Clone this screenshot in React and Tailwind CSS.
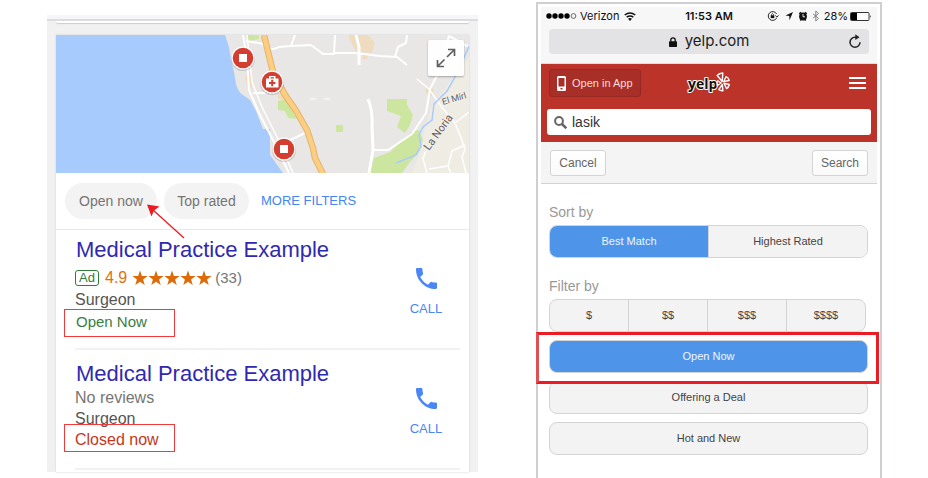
import React from "react";

const STAR = "M8 0.6 L9.9 6 L15.6 6.1 L11.1 9.5 L12.7 15 L8 11.7 L3.3 15 L4.9 9.5 L0.4 6.1 L6.1 6 Z";

function MapView() {
  return (
    <svg
      viewBox="56 35 413 138"
      preserveAspectRatio="xMaxYMid slice"
      className="block h-[138px] w-full bg-[#a8cbfe]"
      role="img"
      aria-label="Map of nearby practices"
    >
      <rect x="56" y="35" width="413" height="138" fill="#a8cbfe" />
      <path
        d="M225 35 L229 47 L231 60 L234 72 L236 84 Q238 92 243 95 L250 100 L256 111 L263 129 L270 129 L270 155 L283 173 L469 173 L469 35 Z"
        fill="#e8e7e5"
      />
      <path d="M469 57 L450 82 L432 106 L425 128 L421 150 L412 173 L469 173 Z" fill="#efece4" />
      <path d="M247 35 h12 v4 l-10 2 Z" fill="#cde69f" />
      <path d="M278 101 L286 99 L297 119 L288 118 L285 111 L278 110 Z" fill="#cde69f" />
      <rect x="336" y="125" width="7" height="7" fill="#cde69f" />
      <path d="M387 99 L407 99 L407 105 L413 115 L410 125 L405 133 L397 127 L401 116 L387 111 Z" fill="#cde69f" />
      <path d="M413 131 L419 130 L423 140 L418 153 L410 162 L402 173 L370 173 L374 158 L390 152 Z" fill="#cde69f" />
      <path d="M348 35 L368 35 L375 43 L372 53 L356 52 L352 44 Z" fill="#efdcc0" />
      <path d="M363 55 l5 0 l-1 4 l-5 0 Z M426 88 l8 1 l-2 7 l-6 -3 Z M245 78 l5 -9 l3 14 l-4 8 Z M277 93 l7 0 l2 6 l-8 0 Z" fill="#efdcc0" />
      <g fill="none" stroke="#ffffff" strokeLinejoin="round">
        <path d="M243 35 L247 58 L249 90 L259 113 L275 144 L289 173" strokeWidth="2" />
        <path d="M247 35 L252 82 L262 107 L279 141 L293 173" strokeWidth="1.5" />
        <path d="M246 41 L264 44 M253 93 H265" strokeWidth="2" />
        <path d="M262 44 Q270 52 279 47 L291 46 L295 35 M291 46 L311 45 L323 54 L334 54 L335 35 M334 53 L355 53 L380 56 L397 57 L407 65 M395 57 L398 47 L406 43 L407 35" strokeWidth="2" />
        <path d="M356 35 L359 47 L359 65" strokeWidth="3" />
        <path d="M368 99 Q373 111 372 126 L373 150 L369 173" strokeWidth="3" />
        <path d="M373 150 L388 150 L412 134 L426 113 L430 89 L441 68 L449 36 L469 47" strokeWidth="2" />
        <path d="M417 79 L429 89 L441 106 L455 123 L461 138 L465 149 L462 157 L466 173 M455 123 L469 112 M465 145 L452 151 L448 166 L451 173 M448 166 L429 169 M426 150 L423 159 L427 173" strokeWidth="1.5" />
        <path d="M286 142 L305 133" strokeWidth="2" />
        <path d="M310 99 h6 M324 99 h6" strokeWidth="1" />
      </g>
      <path d="M469 46 L463 60 L454 79 L447 91 L434 104 L432 120 L423 127 L419 135 L421 146 L416 155 L396 163" fill="none" stroke="#a8cbfe" strokeWidth="1.5" />
      <path d="M264 35 L273 72 L285 95 L295 109 L307 130 L313 148 L315 158 L323 174" fill="none" stroke="#e5b468" strokeWidth="6.5" />
      <path d="M264 35 L273 72 L285 95 L295 109 L307 130 L313 148 L315 158 L323 174" fill="none" stroke="#fbce83" strokeWidth="4.5" />
      <g fontFamily="Roboto, sans-serif" fill="#65625f" stroke="#f3f0ea" strokeWidth="2" paintOrder="stroke">
        <text fontSize="9" transform="translate(443 105) rotate(-16)">El Mírl</text>
        <text fontSize="11" transform="translate(429 151) rotate(-54)">La Noria</text>
      </g>
      {[[243, 58], [272, 82], [284, 149]].map(([x, y], i) => (
        <g key={i}>
          <circle cx={x} cy={y + 1} r="12" fill="#000000" opacity="0.15" />
          <circle cx={x} cy={y} r="11.5" fill="#ffffff" />
          <circle cx={x} cy={y} r="10.3" fill="#d23f31" />
          {i === 1 ? (
            <>
              <path d="M266 78.500 h3 v-2.500 h6.500 v2.500 h3 v9 h-12.500 Z M270.500 78.500 h3.500 v-1.200 h-3.500 Z" fill="#fff" fillRule="evenodd" />
              <path d="M272.200 79.800 v6.400 M269 83 h6.400" stroke="#d23f31" strokeWidth="2" />
            </>
          ) : (
            <rect x={x - 4} y={y - 4} width="8" height="8" fill="#fff" />
          )}
        </g>
      ))}
    </svg>
  );
}

function CallButton({ className }) {
  return (
    <button className={`absolute right-[26px] flex w-[34px] flex-col items-center text-[13px] leading-4 text-[#4a86f5] ${className}`}>
      <svg viewBox="3 3 18 18" className="mb-3 h-[21px] w-[21px]" fill="#4a86f5" aria-hidden="true">
        <path d="M6.62 10.79c1.440 2.830 3.760 5.140 6.590 6.590l2.200-2.200c.27-.27.67-.36 1.020-.24 1.120.37 2.330.57 3.570.57.55 0 1 .45 1 1V20c0 .55-.45 1-1 1-9.390 0-17-7.610-17-17 0-.55.45-1 1-1h3.500c.55 0 1 .45 1 1 0 1.250.2 2.450.57 3.570.11.35.03.74-.25 1.020l-2.200 2.200z" />
      </svg>
      CALL
    </button>
  );
}

function MapResults() {
  return (
    <section className="mt-[15px] h-fit bg-[#f1f1f1]">
      <div className="h-1 bg-[#f6f6f8]" />
      <div className="h-[2px] bg-[#dcdcdd]" />
      <div className="mx-[9px] h-[2px] rounded-b-sm bg-white shadow-[0_1px_1px_#cccccc]" />
      <div className="mx-[9px] mt-3 bg-white shadow-[0_0_2px_#cfcfcf]">
        <div className="relative">
          <MapView />
          <button aria-label="Expand map" className="absolute right-[5px] top-[5px] flex h-9 w-9 items-center justify-center rounded-xs bg-white/95 shadow-[0_1px_2px_rgba(0,0,0,0.3)]">
            <svg viewBox="0 0 20 20" className="h-5 w-5" fill="none" stroke="#606060" strokeWidth="1.700" aria-hidden="true">
              <path d="M12 1.500 H18.500 V8 M18 2 L11 9 M1.500 12 V18.500 H8 M2 18 L8.500 11.500" />
            </svg>
          </button>
        </div>
        <div className="flex h-[57px] items-center border-b border-[#e8e8e8] pl-[9px] text-sm text-[#757575]">
          <div className="relative mr-[7px]">
            <button className="h-9 w-[92px] rounded-full bg-[#f3f3f3]">Open now</button>
            <svg viewBox="0 0 40 36" className="absolute left-[81px] top-[20px] h-9 w-10" aria-hidden="true">
              <path d="M7 7 L38 35" stroke="#ed1c24" strokeWidth="1.300" />
              <path d="M1 1.500 L13.500 3.500 L8 7.500 L5.500 13.500 Z" fill="#ed1c24" />
            </svg>
          </div>
          <button className="mr-3 h-9 w-[85px] rounded-full bg-[#f3f3f3]">Top rated</button>
          <a href="#filters" className="text-[13px] text-[#4285f4]">MORE FILTERS</a>
        </div>
        <article className="relative pl-[19px] pr-[9px]">
          <div className="border-b-2 border-[#f1f1f1] pb-[15px] pt-2">
            <h2 className="text-[22px] leading-6 text-[#2f29b0]"><a href="#practice-1" className="pl-px">Medical Practice Example</a></h2>
            <div className="mt-[5px] flex h-[22px] items-center text-base">
              <span className="flex h-4 w-6 items-center justify-center rounded-[3px] border border-[#2f7d3a] text-[13px] text-[#2f7d3a]">Ad</span>
              <span className="ml-[6px] text-[#e0700c]">4.9</span>
              <span className="ml-[5px] flex" role="img" aria-label="Rated 4.9 of 5">
                {[0, 1, 2, 3, 4].map((n) => (
                  <svg key={n} viewBox="0 0 16 16" className="h-4 w-4" fill="#dd6b0a"><path d={STAR} /></svg>
                ))}
              </span>
              <span className="ml-[3px] text-[15px] text-[#757575]">(33)</span>
            </div>
            <p className="text-base leading-[22px] text-[#555555]">Surgeon</p>
            <p className="relative pl-px text-[15px] leading-[22px] text-[#37803f]">
              Open Now
              <span className="absolute -left-[11px] -top-[2px] h-7 w-[111px] border border-[#f23a3a]" />
            </p>
          </div>
          <CallButton className="top-[38px]" />
        </article>
        <article className="relative pl-[19px] pr-[9px]">
          <div className="border-b-2 border-[#f1f1f1] pb-[18px] pt-3">
            <h2 className="text-[22px] leading-6 text-[#2f29b0]"><a href="#practice-2" className="pl-px">Medical Practice Example</a></h2>
            <p className="mt-px text-base leading-[21px] text-[#757575]">No reviews</p>
            <p className="text-base leading-[21px] text-[#555555]">Surgeon</p>
            <p className="relative text-base leading-[21px] text-[#c5371b]">
              Closed now
              <span className="absolute -left-[11px] -top-[5px] h-7 w-[111px] border border-[#f23a3a]" />
            </p>
          </div>
          <CallButton className="top-[38px]" />
        </article>
        <div className="h-[2px]" />
      </div>
    </section>
  );
}

function StatusBar() {
  return (
    <div className="flex h-[18px] items-center justify-between px-[5px] font-[Inter,sans-serif] text-[11px] text-[#111111]">
      <div className="flex flex-1 items-center">
        <svg viewBox="0 0 31 6" className="mr-[3px] h-[6px] w-[31px]" aria-hidden="true">
          {[3, 9, 15, 21].map((x) => <circle key={x} cx={x} cy="3" r="2.700" />)}
          <circle cx="27.500" cy="3" r="2.400" fill="none" stroke="#333" strokeWidth="0.700" />
        </svg>
        Verizon
        <svg viewBox="0 0 12 9" className="ml-[5px] h-[9px] w-3" fill="none" stroke="#111" strokeWidth="1.500" aria-hidden="true">
          <path d="M0.700 3 Q6 -1.200 11.300 3 M2.700 5.200 Q6 2.600 9.300 5.200" />
          <path d="M4 6.800 Q6 5.400 8 6.800 L6 9 Z" fill="#111" stroke="none" />
        </svg>
      </div>
      <span className="font-semibold">11:53 AM</span>
      <div className="flex flex-1 items-center justify-end">
        <svg viewBox="0 0 55 12" className="mr-[3px] h-3 w-[55px]" fill="none" stroke="#111" aria-hidden="true">
          <path d="M10.600 4 A4.400 4.400 0 1 0 10.600 8 M9.300 5.500 L11 7.200 L12.500 5.300" strokeWidth="0.900" />
          <rect x="4.700" y="5.300" width="3.600" height="2.800" fill="#111" stroke="none" />
          <path d="M5.500 5.500 V4.500 Q6.500 2.800 7.500 4.500 V5.500" strokeWidth="0.800" />
          <path d="M27 2 L19.500 5.500 L23.300 6.100 L23.500 10.300 Z" fill="#111" stroke="none" />
          <circle cx="37" cy="6.500" r="3.900" fill="#111" stroke="none" />
          <path d="M33.300 3.700 L35 2.200 M40.700 3.700 L39 2.200 M34.300 10.500 L35.500 9 M39.700 10.500 L38.500 9" strokeWidth="1.500" />
          <path d="M37 4 V6.800 H39" stroke="#fff" strokeWidth="0.900" />
          <path d="M47 3.800 L52.500 8.400 L49.800 11 V1 L52.500 3.600 L47 8.200" stroke="#777" strokeWidth="0.900" />
        </svg>
        28%
        <svg viewBox="0 0 22 9" className="ml-[2px] h-[9px] w-[22px]" aria-hidden="true">
          <rect x="0.500" y="0.500" width="18.500" height="8" rx="1" fill="#fff" stroke="#333" />
          <rect x="1" y="1" width="6" height="7" fill="#000" />
          <path d="M20 3 Q21.700 4.500 20 6 Z" fill="#333" />
        </svg>
      </div>
    </div>
  );
}

const PILL = "h-[33px] w-full rounded-lg border border-[#d4d4d4] text-[11px]";

function YelpFilters() {
  return (
    <section className="mt-[2px] border-2 border-b-0 border-[#d1ced1] px-[3px] pb-[23px] pt-[3px]">
      <div className="border-b border-[#dddddd] bg-[#f7f7f7] pb-[9px]">
        <StatusBar />
        <div className="relative mx-2 mt-1 flex h-[25px] items-center justify-center rounded bg-[#e3e3e5] font-[Inter,sans-serif] text-[15px] text-[#222222]">
          <svg viewBox="0 0 8 10" className="mr-2 h-[10px] w-2" aria-hidden="true">
            <rect y="4.300" width="8" height="5.700" rx="0.700" fill="#111" />
            <path d="M1.800 5 V3 Q1.800 0.800 4 0.800 Q6.200 0.800 6.200 3 V5" fill="none" stroke="#111" strokeWidth="1.300" />
          </svg>
          yelp.com
          <button aria-label="Reload" className="absolute right-[7px] top-[5px]">
            <svg viewBox="0 0 14 15" className="h-[15px] w-[14px]" fill="none" stroke="#222" strokeWidth="1.500" aria-hidden="true">
              <path d="M8.500 3.200 H7 A5 5 0 1 0 12 8.200" />
              <path d="M7.300 0.300 L11.500 3.200 L7.300 6 Z" fill="#222" stroke="none" />
            </svg>
          </button>
        </div>
      </div>
      <header className="bg-[#bc3429] px-[6px] pb-[7px] pt-[5px]">
        <div className="flex h-[28px] items-center justify-between pl-[2px] pr-[5px]">
          <div className="flex-1">
            <button className="flex h-[28px] w-[92px] items-center rounded-[3px] border border-[#972821] bg-[#a82e28] pl-[7px] text-[11px] text-[#f6dedb]">
              <svg viewBox="0 0 9 15" className="mr-[6px] h-[15px] w-[9px]" aria-hidden="true">
                <path d="M1.500 0 H7.500 Q9 0 9 1.500 V13.500 Q9 15 7.500 15 H1.500 Q0 15 0 13.500 V1.500 Q0 0 1.500 0 Z M1.500 2 V10.500 H7.500 V2 Z M3.500 12 V13.500 H5.500 V12 Z" fill="#fff" fillRule="evenodd" />
              </svg>
              Open in App
            </button>
          </div>
          <svg viewBox="0 0 44 26" className="h-[26px] w-11" role="img" aria-label="Yelp">
            <text x="2" y="19" fontFamily="Open Sans, sans-serif" fontSize="14" fontWeight="700" fill="#111" stroke="#fff" strokeWidth="2" strokeLinejoin="round" paintOrder="stroke">yelp</text>
            <g fill="#c42f26" stroke="#fff" strokeWidth="1.400" strokeLinejoin="round">
              <path d="M36.200 11.500 L31.200 5.500 Q33 3.200 36.800 3 Z" />
              <path d="M37.700 11.500 L40 6.700 Q42.700 7.700 43.200 10.500 Z" />
              <path d="M37.900 13.300 L43.300 14.500 Q42.700 17.500 40.500 18.500 Z" />
              <path d="M36.300 14.500 L36.900 20.800 Q34.300 21 32.800 19.600 Z" />
              <path d="M35.200 13 L31.600 10.800 Q30.600 13 31.300 15.500 Z" />
            </g>
          </svg>
          <div className="flex flex-1 justify-end">
            <button aria-label="Menu" className="flex flex-col gap-[3px]">
              <span className="h-[2px] w-[17px] bg-white" />
              <span className="h-[2px] w-[17px] bg-white" />
              <span className="h-[2px] w-[17px] bg-white" />
            </button>
          </div>
        </div>
        <label className="mt-3 flex h-[26px] items-center rounded-[3px] bg-white pl-[7px]">
          <svg viewBox="0 0 13 13" className="mr-[5px] h-[13px] w-[13px]" fill="none" stroke="#666" strokeWidth="2" aria-hidden="true">
            <circle cx="5" cy="5" r="3.900" />
            <path d="M8 8 L12.300 12.300" strokeWidth="2.500" />
          </svg>
          <input aria-label="Search Yelp" defaultValue="lasik" className="min-w-0 flex-1 bg-transparent text-sm text-[#333333] outline-none" />
        </label>
      </header>
      <div className="flex h-[42px] items-center justify-between border-b border-[#d3d3d3] bg-[#f4f4f4] px-[9px] text-xs text-[#666666]">
        <button className="h-[26px] w-14 rounded-[3px] border border-[#d4d4d4] bg-linear-to-b from-white to-[#fafafa]">Cancel</button>
        <button className="h-[26px] w-14 rounded-[3px] border border-[#d4d4d4] bg-linear-to-b from-white to-[#fafafa]">Search</button>
      </div>
      <div className="pl-2 pr-[9px] pt-4">
        <h3 className="mb-px text-sm leading-6 text-[#999999]">Sort by</h3>
        <div className="flex h-[33px] overflow-hidden rounded-lg border border-[#d4d4d4] text-[11px]">
          <button className="flex-1 bg-[#4e95e9] text-[#eef5ff]">Best Match</button>
          <button className="flex-1 border-l border-[#d4d4d4] bg-[#f3f3f3] text-[#444444]">Highest Rated</button>
        </div>
        <h3 className="mb-px mt-4 text-sm leading-6 text-[#999999]">Filter by</h3>
        <div className="mr-[2px] flex h-[33px] divide-x divide-[#d4d4d4] overflow-hidden rounded-lg border border-[#d4d4d4] bg-[#f3f3f3] text-[11px] text-[#444444]">
          <button className="flex-1">$</button>
          <button className="flex-1">$$</button>
          <button className="flex-1">$$$</button>
          <button className="flex-1">$$$$</button>
        </div>
        <div className="mt-2 flex flex-col gap-2">
          <div className="relative">
            <button className={`${PILL} bg-[#4e95e9] text-[#eef5ff]`}>Open Now</button>
            <span className="absolute -bottom-[11px] -left-[13px] -right-[11px] -top-[8px] border-[3px] border-[#ed1c24] border-l-[#dd5156]" />
          </div>
          <button className={`${PILL} bg-[#f3f3f3] text-[#444444]`}>Offering a Deal</button>
          <button className={`${PILL} bg-[#f3f3f3] text-[#444444]`}>Hot and New</button>
        </div>
      </div>
    </section>
  );
}

export default function App() {
  return (
    <main className="grid grid-cols-[431fr_346fr] gap-[58px] bg-white pl-[47px] pr-[46px] font-['Liberation_Sans',Arial,sans-serif]">
      <MapResults />
      <YelpFilters />
    </main>
  );
}
